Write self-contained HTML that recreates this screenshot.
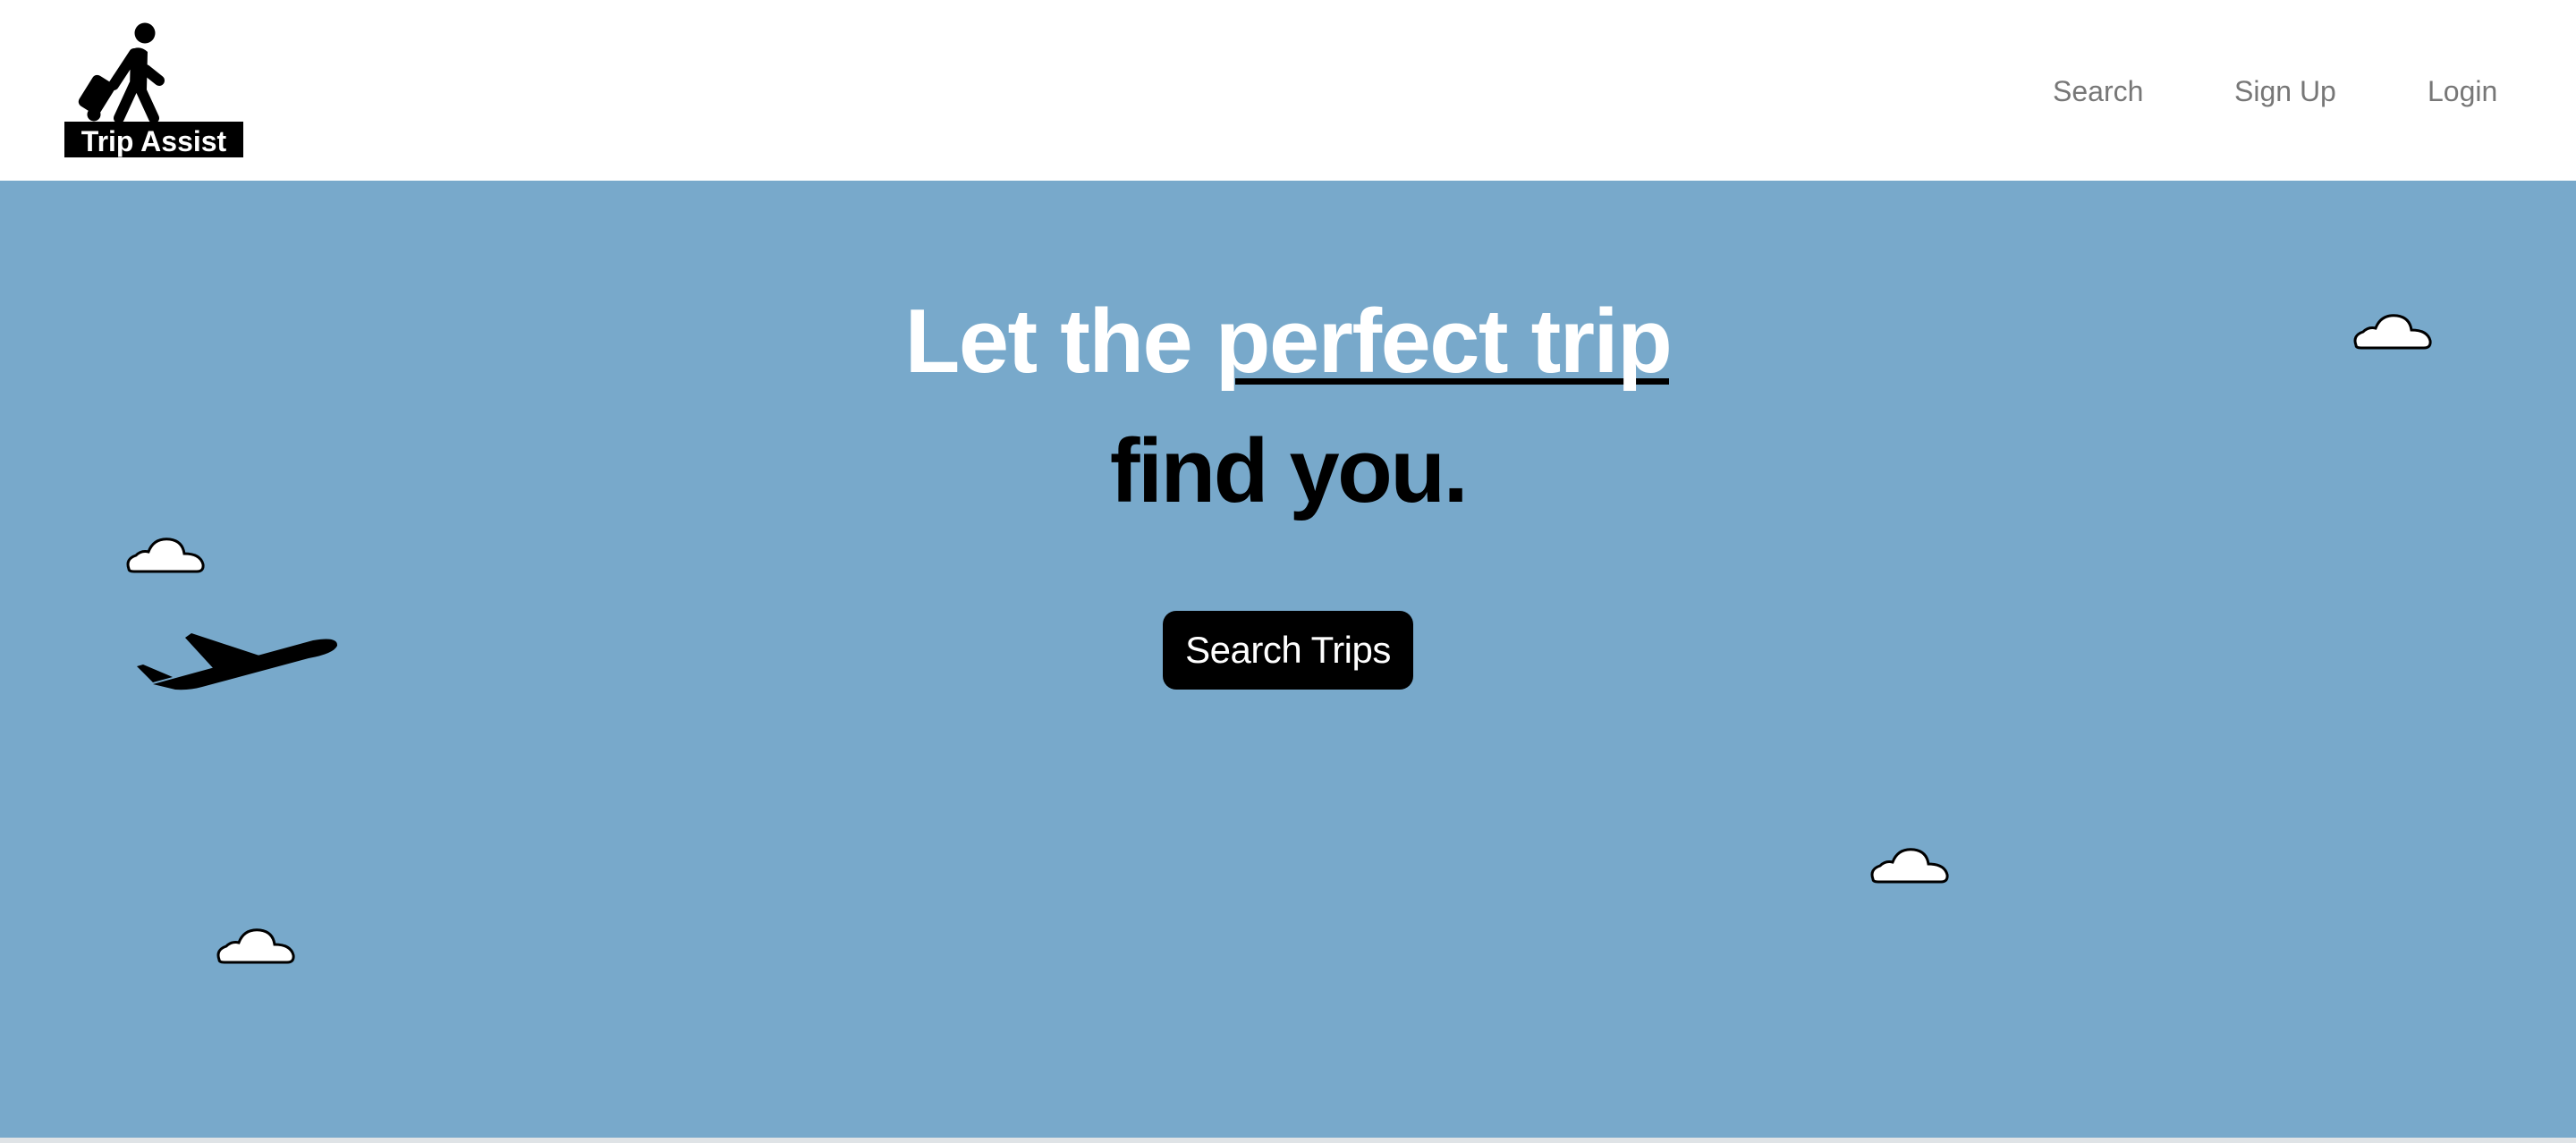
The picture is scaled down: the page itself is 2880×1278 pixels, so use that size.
<!DOCTYPE html>
<html><head><meta charset="utf-8"><style>
html,body{margin:0;padding:0;width:2880px;height:1278px;overflow:hidden;background:#78a9cb;font-family:"Liberation Sans",Arial,sans-serif}
.hdr{position:absolute;left:0;top:0;width:2880px;height:202px;background:#fff}
.nav{position:absolute;top:86px;font-size:32px;color:#777;line-height:1;white-space:nowrap}
.logo{position:absolute;left:72px;top:136px;width:200px;height:40px;background:#000;color:#fff;font-weight:bold;font-size:32px;line-height:44px;text-align:center}
.h1{position:absolute;left:0;width:2880px;text-align:center;font-weight:bold;font-size:101px;letter-spacing:-1.5px;line-height:1;white-space:nowrap}
.btn{position:absolute;left:1300px;top:683px;width:280px;height:88px;background:#000;border-radius:15px;color:#fff;font-size:42px;line-height:88px;text-align:center;letter-spacing:-0.5px}
.foot{position:absolute;left:0;top:1272px;width:2880px;height:6px;background:#dfe3e6}
</style></head><body>
<div class="hdr"></div>
<svg style="position:absolute;left:0;top:0" width="300" height="140">
<circle cx="162" cy="37" r="11.5" fill="#000"/>
<g stroke="#000" stroke-width="12" stroke-linecap="round" fill="none">
<path d="M150,60 L127,95"/>
<path d="M150,95 L133,132"/>
<path d="M155,95 L172,132"/>
<path d="M163,78 L178,90"/>
</g>
<path d="M146,56 Q156,50 165,58 L164,100 L145,100 Z" fill="#000"/>
<g transform="rotate(32 108 106)"><rect x="94" y="86" width="28" height="40" rx="6" fill="#000"/></g>
<circle cx="105" cy="128" r="7.5" fill="#000"/>
</svg>
<div class="logo">Trip Assist</div>
<div class="nav" style="left:2295px">Search</div>
<div class="nav" style="left:2498px">Sign Up</div>
<div class="nav" style="left:2714px">Login</div>

<div style="position:absolute;left:1381px;top:423px;width:485px;height:7px;background:#000"></div>
<div class="h1" style="top:332px;color:#fff">Let the perfect trip</div>
<div class="h1" style="top:477px;color:#000;letter-spacing:-2.5px">find you.</div>
<div class="btn">Search Trips</div>

<svg style="position:absolute;left:0;top:0" width="2880" height="1278">
<defs>
<path id="cl" d="M4,37 Q0,26 12,22 Q18,16 26,18 Q32,2 50,4 Q64,6 66,20 Q84,20 87,32 Q88,40 80,40 L10,40 Q4,40 4,37 Z" fill="#fff" stroke="#000" stroke-width="3"/>
</defs>
<use href="#cl" x="2630" y="349"/>
<use href="#cl" x="140" y="599"/>
<use href="#cl" x="2090" y="946"/>
<use href="#cl" x="241" y="1036"/>
<g fill="#000">
<path d="M171,765 L350,716 Q378,711 377,722 Q373,731 345,736 L226,768 Q212,772 196,771 Z"/>
<path d="M207,713 L214,708 L290,733 L240,749 Z"/>
<path d="M153,745 L160,743 L193,757 L171,763 Z"/>
</g>
</svg>
<div class="foot"></div>
</body></html>
